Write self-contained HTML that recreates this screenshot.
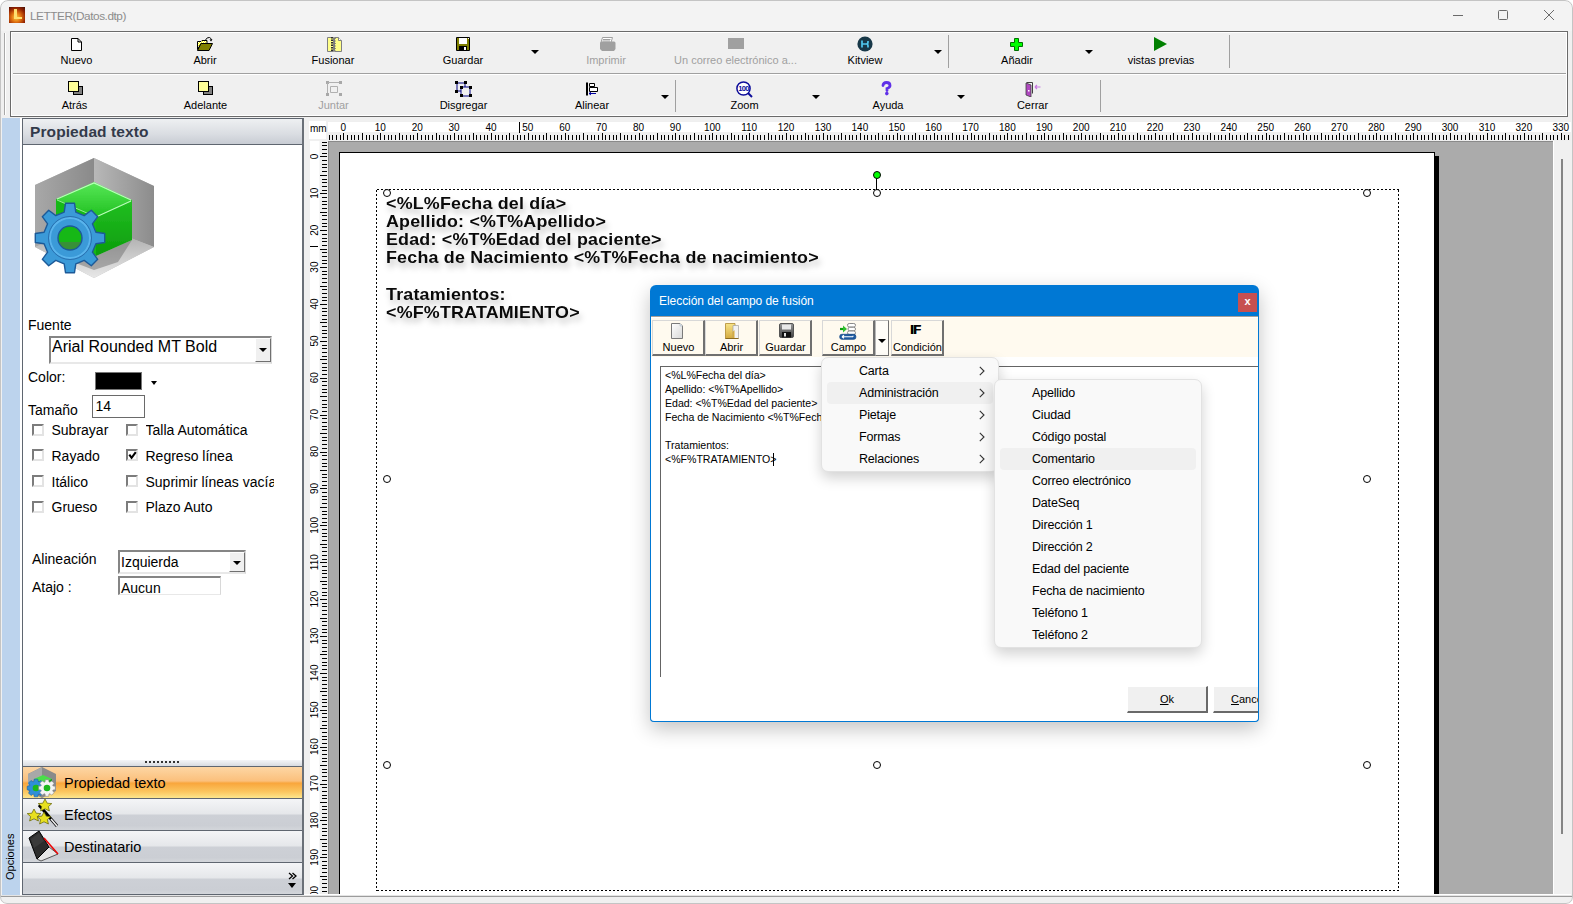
<!DOCTYPE html><html><head><meta charset="utf-8"><style>
*{margin:0;padding:0;box-sizing:border-box}
html,body{width:1573px;height:904px;overflow:hidden;background:#fff;font-family:"Liberation Sans",sans-serif;}
.ab{position:absolute}
#win{position:absolute;left:0;top:0;width:1573px;height:904px;background:#f0f0f0;overflow:hidden;border-radius:8px 8px 7px 7px}
.tb{position:absolute;font-size:11px;color:#000;white-space:nowrap;text-align:center}
.dis{color:#a0a0a0}
.arr{position:absolute;width:0;height:0;border-left:4px solid transparent;border-right:4px solid transparent;border-top:4px solid #000}
.sep{position:absolute;width:1px;background:#a0a0a0}
.lbl{position:absolute;font-size:14px;color:#000;white-space:nowrap}
.cb{position:absolute;width:12px;height:12px;border:2px solid #7c7c7c;border-right-color:#e3e3e3;border-bottom-color:#e3e3e3;background:#fff}
.mi{position:absolute;font-size:12.5px;letter-spacing:-.18px;color:#000;white-space:nowrap}
.dt{position:absolute;font-size:17px;letter-spacing:.2px;transform:scaleX(1.05);transform-origin:0 0;font-weight:bold;color:#0a0a0a;white-space:nowrap;text-shadow:2px 5px 6px rgba(0,0,0,.26)}
.hd{position:absolute;width:8px;height:8px;border:1px solid #000;border-radius:50%;background:#fff}
</style></head><body>
<div id="win">
<div class="ab" style="left:0;top:0;width:1573px;height:31px;background:#f3f3f3"></div>
<div class="ab" style="left:9px;top:7px;width:16px;height:16px;background:radial-gradient(circle at 45% 65%,#ffd040,#e07010 35%,#902000 70%,#401008)"></div>
<div class="ab" style="left:14px;top:9px;width:3px;height:10px;background:#ffe070"></div><div class="ab" style="left:14px;top:17px;width:8px;height:2px;background:#ffe070"></div>
<div class="ab" style="left:30px;top:9px;font-size:11.8px;letter-spacing:-.45px;color:#8c8c8c;line-height:14px">LETTER(Datos.dtp)</div>
<div class="ab" style="left:1453px;top:15px;width:10px;height:1px;background:#6a6a6a"></div>
<div class="ab" style="left:1498px;top:10px;width:10px;height:10px;border:1px solid #6a6a6a;border-radius:1.5px"></div>
<svg class="ab" style="left:1544px;top:10px" width="10" height="10"><path d="M0 0L10 10M10 0L0 10" stroke="#6a6a6a" stroke-width="1"/></svg>
<div class="ab" style="left:4px;top:33px;width:2px;height:82px;border-left:1px solid #a8a8a8;border-right:1px solid #fff"></div>
<div class="ab" style="left:10px;top:31px;width:1558px;height:86px;border:1px solid #6a6a6a;background:#f0f0f0;box-shadow:inset 1px 1px #fff,inset -1px -1px #fff"></div>
<div class="ab" style="left:13px;top:73px;width:1553px;height:1px;background:#a0a0a0"></div>
<div class="ab" style="left:13px;top:74px;width:1553px;height:1px;background:#fff"></div>
<div class="tb" style="left:-23.5px;top:54px;width:200px;line-height:13px">Nuevo</div>
<div class="tb" style="left:105.0px;top:54px;width:200px;line-height:13px">Abrir</div>
<div class="tb" style="left:233.0px;top:54px;width:200px;line-height:13px">Fusionar</div>
<div class="tb" style="left:363.0px;top:54px;width:200px;line-height:13px">Guardar</div>
<div class="tb dis" style="left:506.0px;top:54px;width:200px;line-height:13px">Imprimir</div>
<div class="tb dis" style="left:635.5px;top:54px;width:200px;line-height:13px">Un correo electrónico a...</div>
<div class="tb" style="left:765.0px;top:54px;width:200px;line-height:13px">Kitview</div>
<div class="tb" style="left:917.0px;top:54px;width:200px;line-height:13px">Añadir</div>
<div class="tb" style="left:1061.0px;top:54px;width:200px;line-height:13px">vistas previas</div>
<div class="tb" style="left:-25.5px;top:99px;width:200px;line-height:13px">Atrás</div>
<div class="tb" style="left:105.5px;top:99px;width:200px;line-height:13px">Adelante</div>
<div class="tb dis" style="left:233.5px;top:99px;width:200px;line-height:13px">Juntar</div>
<div class="tb" style="left:363.5px;top:99px;width:200px;line-height:13px">Disgregar</div>
<div class="tb" style="left:492.0px;top:99px;width:200px;line-height:13px">Alinear</div>
<div class="tb" style="left:644.5px;top:99px;width:200px;line-height:13px">Zoom</div>
<div class="tb" style="left:788.0px;top:99px;width:200px;line-height:13px">Ayuda</div>
<div class="tb" style="left:932.5px;top:99px;width:200px;line-height:13px">Cerrar</div>
<div class="arr" style="left:531px;top:50px"></div>
<div class="arr" style="left:933.5px;top:50px"></div>
<div class="arr" style="left:1085px;top:50px"></div>
<div class="arr" style="left:660.5px;top:95px"></div>
<div class="arr" style="left:812px;top:95px"></div>
<div class="arr" style="left:956.5px;top:95px"></div>
<div class="sep" style="left:948px;top:35px;height:33px"></div>
<div class="sep" style="left:1229px;top:35px;height:33px"></div>
<div class="sep" style="left:675px;top:80px;height:32px"></div>
<div class="sep" style="left:1100px;top:80px;height:32px"></div>
<svg class="ab" style="left:71px;top:38px" width="11" height="13" viewBox="0 0 11 13"><path d="M.5 .5H7L10.5 4V12.5H.5Z" fill="#fff" stroke="#000"/><path d="M7 .5V4H10.5" fill="none" stroke="#000"/></svg>
<svg class="ab" style="left:196px;top:36px" width="17" height="15" viewBox="0 0 17 15"><defs><pattern id="ck" width="2" height="2" patternUnits="userSpaceOnUse"><rect width="2" height="2" fill="#ffff00"/><rect width="1" height="1" fill="#fff"/><rect x="1" y="1" width="1" height="1" fill="#fff"/></pattern></defs><path d="M1.5 5.5H5L6 4.5H11V7.5H5L1.5 13.5Z" fill="url(#ck)" stroke="#000"/><path d="M1.5 14.5L5 7.5H16.5L13 14.5Z" fill="#808000" stroke="#000"/><path d="M9.5 4Q11 1 13.5 1.5Q15 2 15.5 4" fill="none" stroke="#000"/><path d="M13.5 3.5H16.5L15 5.5Z" fill="#000"/></svg>
<svg class="ab" style="left:327px;top:36px" width="15" height="16" viewBox="0 0 15 16"><path d="M.5 1.5H6.5V15.5H.5Z" fill="#ffff88" stroke="#808080"/><path d="M7.5 1.5H11.5L14.5 4.5V15.5H7.5Z" fill="#ffff88" stroke="#808080"/><path d="M11.5 1.5V4.5H14.5" fill="#fff" stroke="#808080"/><path d="M5 1V15" stroke="#303030" stroke-width="2" stroke-dasharray="1.5 1"/><path d="M8 2V15" stroke="#707070" stroke-width="1.5" stroke-dasharray="1 1.5"/></svg>
<svg class="ab" style="left:456px;top:37px" width="14" height="14" viewBox="0 0 14 14"><rect x="0" y="0" width="14" height="14" rx="1" fill="#000"/><rect x="1" y="1" width="12" height="12" fill="#808000"/><rect x="3" y="1" width="8" height="6" fill="#fff"/><rect x="3" y="9" width="8" height="4" fill="#000"/><rect x="8" y="10" width="2" height="3" fill="#fff"/><rect x="12" y="1" width="1" height="1" fill="#fff"/></svg>
<svg class="ab" style="left:599px;top:37px" width="17" height="15" viewBox="0 0 17 15"><path d="M3.5 .5H13.5L12 5.5H2Z" fill="#fff" stroke="#a0a0a0"/><path d="M4 2.5H11.5M3.5 4H11" stroke="#a0a0a0"/><path d="M1 6Q1 4.5 3 4.5H15Q16.5 4.5 16.5 6V12L15 14H3L1 12Z" fill="#a0a0a0"/></svg>
<svg class="ab" style="left:728px;top:38px" width="16" height="11" viewBox="0 0 16 11"><rect width="16" height="11" fill="#a0a0a0"/></svg>
<svg class="ab" style="left:857px;top:36px" width="16" height="16" viewBox="0 0 16 16"><circle cx="8" cy="8" r="7.6" fill="#183848"/><path d="M5 4.5V11.5M5 8H9.5Q11 8 11 6V5M9.5 8Q11 8 11 10V11.5" stroke="#50c8f0" stroke-width="1.7" fill="none"/></svg>
<svg class="ab" style="left:1010px;top:38px" width="13" height="13" viewBox="0 0 13 13"><path d="M4.5 .5H8.5V4.5H12.5V8.5H8.5V12.5H4.5V8.5H.5V4.5H4.5Z" fill="#00ff00" stroke="#007000"/></svg>
<svg class="ab" style="left:1154px;top:37px" width="13" height="14" viewBox="0 0 13 14"><path d="M0 0L13 7L0 14Z" fill="#008000"/></svg>
<svg class="ab" style="left:68px;top:81px" width="15" height="14" viewBox="0 0 15 14"><rect x="5.5" y="5.5" width="9" height="8" fill="#808080" stroke="#000"/><rect x=".5" y=".5" width="10" height="10" fill="#ffff99" stroke="#000"/></svg>
<svg class="ab" style="left:198px;top:81px" width="15" height="14" viewBox="0 0 15 14"><rect x="5.5" y="5.5" width="9" height="8" fill="#808080" stroke="#000"/><rect x=".5" y=".5" width="10" height="10" fill="#ffff99" stroke="#000"/></svg>
<svg class="ab" style="left:326px;top:81px" width="16" height="15" viewBox="0 0 16 15"><g fill="#a8a8a8"><rect x="0" y="0" width="3" height="3"/><rect x="13" y="0" width="3" height="3"/><rect x="0" y="12" width="3" height="3"/><rect x="13" y="12" width="3" height="3"/></g><path d="M1.5 2V12M2 1.5H13M4.5 5.5H11.5V11.5H4.5Z" fill="none" stroke="#b0b0b0"/></svg>
<svg class="ab" style="left:455px;top:81px" width="17" height="16" viewBox="0 0 17 16"><path d="M2 2H10V6M2 2V10H6M6 6H15V15H6Z" fill="none" stroke="#000080"/><g fill="#000"><rect x="0" y="0" width="3" height="3"/><rect x="9" y="0" width="3" height="3"/><rect x="0" y="9" width="3" height="3"/><rect x="5" y="5" width="3" height="3"/><rect x="14" y="5" width="3" height="3"/><rect x="5" y="13" width="3" height="3"/><rect x="14" y="13" width="3" height="3"/></g></svg>
<svg class="ab" style="left:586px;top:82px" width="13" height="14" viewBox="0 0 13 14"><rect x="0" y="0.5" width="2" height="13" fill="#000"/><path d="M3.5 1.5H8.5V4.5H3.5ZM3.5 5.5H11.5V9.5H3.5Z" fill="#fff" stroke="#000"/><path d="M3 11.5H10M3 11.5L5 10M3 11.5L5 13" stroke="#0000a0" fill="none"/></svg>
<svg class="ab" style="left:736px;top:81px" width="17" height="17" viewBox="0 0 17 17"><circle cx="7.5" cy="7.5" r="6.6" fill="#fff" stroke="#0c0c9a" stroke-width="1.5"/><text x="7.5" y="10.3" font-size="7.5" font-weight="bold" text-anchor="middle" fill="#0c0c9a" font-family="Liberation Sans" letter-spacing="-.6">100</text><path d="M12 12L16 16" stroke="#0c0c9a" stroke-width="2"/></svg>
<svg class="ab" style="left:881px;top:81px" width="11" height="15" viewBox="0 0 11 15"><path d="M2 4.5Q2 1.5 5.5 1.5Q9 1.5 9 4.5Q9 6.5 6 7.5V9.5" fill="none" stroke="#6030e8" stroke-width="2.8" stroke-linecap="round"/><circle cx="5.8" cy="12.6" r="1.8" fill="#6030e8"/></svg>
<svg class="ab" style="left:1025px;top:81px" width="17" height="16" viewBox="0 0 17 16"><path d="M1.5 1.5H7.5V12.5" fill="none" stroke="#404040"/><path d="M1 2L6 4V16L1 14Z" fill="#b048c0" stroke="#404040" stroke-width=".8"/><rect x="3" y="9" width="1.5" height="1.5" fill="#fff"/><path d="M10 6H15.5M10 6L12 4M10 6L12 8" stroke="#c878e0" stroke-width="1.2" fill="none"/></svg>
<div class="ab" style="left:2px;top:118px;width:18px;height:777px;background:#bcd3ed"></div>
<div class="ab" style="left:20px;top:118px;width:2px;height:777px;background:#fff"></div>
<div class="ab" style="left:3px;top:880px;width:50px;height:14px;font-size:11px;color:#000;transform:rotate(-90deg);transform-origin:0 0;line-height:14px">Opciones</div>
<div class="ab" style="left:22px;top:118px;width:282px;height:777px;border:1px solid #5f6670;border-right:2px solid #6a7078;background:#fff"></div>
<div class="ab" style="left:23px;top:119px;width:279px;height:26px;background:linear-gradient(#eef0f2,#dadde2 60%,#c8ccd3);border-bottom:1px solid #5f6670"></div>
<div class="ab" style="left:30px;top:123px;font-size:15.5px;letter-spacing:.1px;font-weight:bold;color:#333a4a;line-height:18px">Propiedad texto</div>
<svg class="ab" style="left:28px;top:152px" width="134" height="134" viewBox="0 0 134 134">
<defs>
<linearGradient id="lw" x1="0" y1="0" x2="1" y2="0"><stop offset="0" stop-color="#a8a8a8"/><stop offset="1" stop-color="#8a8a8a"/></linearGradient>
<linearGradient id="rw" x1="0" y1="0" x2="1" y2="0"><stop offset="0" stop-color="#b8b8b8"/><stop offset="1" stop-color="#8c8c8c"/></linearGradient>
<linearGradient id="fl" x1="0" y1="0" x2="0" y2="1"><stop offset="0" stop-color="#a0a0a0"/><stop offset="1" stop-color="#e8e8e8"/></linearGradient>
<linearGradient id="gt" x1="0" y1="0" x2="0" y2="1"><stop offset="0" stop-color="#58e858"/><stop offset="1" stop-color="#20c020"/></linearGradient>
<linearGradient id="gr" x1="0" y1="0" x2="0" y2="1"><stop offset="0" stop-color="#22c022"/><stop offset="1" stop-color="#0c9c0c"/></linearGradient>
<filter id="bl"><feGaussianBlur stdDeviation=".6"/></filter>
</defs>
<g filter="url(#bl)">
<path d="M66 6L126 34V95L66 126L7 95V33Z" fill="#bdbdbd"/>
<path d="M66 6V72L7 95V33Z" fill="url(#lw)"/>
<path d="M66 6L126 34V95L66 72Z" fill="url(#rw)"/>
<path d="M7 95L66 72L126 95L66 126Z" fill="url(#fl)"/>
<path d="M30 92L68 104L104 88L90 110L66 118L40 108Z" fill="#707070" opacity=".5"/>
<path d="M28 47L66 30L104 48L68 65Z" fill="url(#gt)"/>
<path d="M28 47L68 65V104L28 89Z" fill="#18b818"/>
<path d="M68 65L104 48V88L68 104Z" fill="url(#gr)"/>
<path d="M29 47L66 31L103 48M68 65L103 49" fill="none" stroke="#b8ffb8" stroke-width="1.2"/>
<path d="M29 48L68 65" fill="none" stroke="#90f090" stroke-width="1"/>
<g transform="translate(42 86)"><path d="M-5.8 -25.9L-4.5 -34.7L4.5 -34.7L5.8 -25.9L14.2 -22.4L21.3 -27.7L27.7 -21.3L22.4 -14.2L25.9 -5.8L34.7 -4.5L34.7 4.5L25.9 5.8L22.4 14.2L27.7 21.3L21.3 27.7L14.2 22.4L5.8 25.9L4.5 34.7L-4.5 34.7L-5.8 25.9L-14.2 22.4L-21.3 27.7L-27.7 21.3L-22.4 14.2L-25.9 5.8L-34.7 4.5L-34.7 -4.5L-25.9 -5.8L-22.4 -14.2L-27.7 -21.3L-21.3 -27.7L-14.2 -22.4Z" fill="#3a9ad8" stroke="#1e5a98" stroke-width="1.4" stroke-linejoin="round"/><circle r="20" fill="none" stroke="#5ab4ec" stroke-width="2"/><circle r="21.5" fill="none" stroke="#2a70b0" stroke-width="1"/><circle r="12" fill="#18b818" stroke="#1e5a98" stroke-width="1.4"/><path d="M-11 4A12 12 0 0 0 11 4Z" fill="#606060" opacity=".45"/></g>
</g>
</svg>
<div class="lbl" style="left:28px;top:317.323px;font-size:14px;line-height:16.099999999999998px;">Fuente</div>
<div class="ab" style="left:49px;top:336px;width:223px;height:28px;border:2px solid #858585;border-right-color:#d8d8d8;border-bottom-color:#e8e8e8;background:#fff"></div>
<div class="lbl" style="left:52px;top:338.012px;font-size:16px;line-height:18.4px;">Arial Rounded MT Bold</div>
<div class="ab" style="left:255px;top:338px;width:16px;height:24px;background:#f0f0f0;border:1px solid #fff;border-right-color:#707070;border-bottom-color:#707070"></div>
<div class="arr" style="left:259px;top:348px;border-width:4px 4px 0 4px"></div>
<div class="lbl" style="left:28px;top:369.323px;font-size:14px;line-height:16.099999999999998px;">Color:</div>
<div class="ab" style="left:95px;top:372px;width:47px;height:18px;background:#000;border:1px solid #777"></div>
<div class="arr" style="left:151px;top:381px;border-left-width:3.5px;border-right-width:3.5px;border-top-width:4px"></div>
<div class="lbl" style="left:28px;top:402.323px;font-size:14px;line-height:16.099999999999998px;">Tamaño</div>
<div class="ab" style="left:92px;top:395px;width:53px;height:23px;border:1px solid #6a6a6a;background:#fff"></div>
<div class="lbl" style="left:95.5px;top:397.823px;font-size:14px;line-height:16.099999999999998px;">14</div>
<div class="cb" style="left:32px;top:423.6px"></div>
<div class="cb" style="left:126px;top:423.6px"></div>
<div class="lbl" style="left:51.5px;top:422.123px;font-size:14px;line-height:16.099999999999998px;">Subrayar</div>
<div class="lbl" style="left:145.5px;top:422.123px;font-size:14px;line-height:16.099999999999998px;width:128.5px;overflow:hidden">Talla Automática</div>
<div class="cb" style="left:32px;top:449.3px"></div>
<div class="cb" style="left:126px;top:449.3px"></div>
<div class="lbl" style="left:51.5px;top:447.823px;font-size:14px;line-height:16.099999999999998px;">Rayado</div>
<div class="lbl" style="left:145.5px;top:447.823px;font-size:14px;line-height:16.099999999999998px;width:128.5px;overflow:hidden">Regreso línea</div>
<div class="cb" style="left:32px;top:475px"></div>
<div class="cb" style="left:126px;top:475px"></div>
<div class="lbl" style="left:51.5px;top:473.52299999999997px;font-size:14px;line-height:16.099999999999998px;">Itálico</div>
<div class="lbl" style="left:145.5px;top:473.52299999999997px;font-size:14px;line-height:16.099999999999998px;width:128.5px;overflow:hidden">Suprimir líneas vacías</div>
<div class="cb" style="left:32px;top:500.8px"></div>
<div class="cb" style="left:126px;top:500.8px"></div>
<div class="lbl" style="left:51.5px;top:499.323px;font-size:14px;line-height:16.099999999999998px;">Grueso</div>
<div class="lbl" style="left:145.5px;top:499.323px;font-size:14px;line-height:16.099999999999998px;width:128.5px;overflow:hidden">Plazo Auto</div>
<svg class="ab" style="left:128px;top:451px" width="9" height="9" viewBox="0 0 9 9"><path d="M1.3 3.6L3.6 6.8L7.8 1.2" fill="none" stroke="#000" stroke-width="2.1"/></svg>
<div class="lbl" style="left:32px;top:550.9230000000001px;font-size:14px;line-height:16.099999999999998px;">Alineación</div>
<div class="ab" style="left:118px;top:550px;width:128px;height:24px;border:2px solid #858585;border-right-color:#d8d8d8;border-bottom-color:#e8e8e8;background:#fff"></div>
<div class="lbl" style="left:121px;top:554.3230000000001px;font-size:14px;line-height:16.099999999999998px;">Izquierda</div>
<div class="ab" style="left:229px;top:552px;width:16px;height:20px;background:#f0f0f0;border:1px solid #fff;border-right-color:#707070;border-bottom-color:#707070"></div>
<div class="arr" style="left:233px;top:561px"></div>
<div class="lbl" style="left:32px;top:579.3230000000001px;font-size:14px;line-height:16.099999999999998px;">Atajo :</div>
<div class="ab" style="left:118px;top:576px;width:103px;height:19px;border:2px solid #858585;border-right-color:#d8d8d8;border-bottom-color:#e8e8e8;border-right-width:1px;border-bottom-width:1px;background:#fff"></div>
<div class="lbl" style="left:121px;top:579.8230000000001px;font-size:14px;line-height:16.099999999999998px;">Aucun</div>
<div class="ab" style="left:23px;top:760px;width:279px;height:6px;background:linear-gradient(#f4f5f7,#d8dbe0)"></div>
<div class="ab" style="left:145px;top:761px;width:34px;height:2px;background:repeating-linear-gradient(90deg,#333 0 2px,transparent 2px 4px)"></div>
<div class="ab" style="left:23px;top:766px;width:279px;height:32px;background:linear-gradient(#fdd6a4,#fbc07c 45%,#f9a63c 52%,#fbc660 80%,#fde68c);border-top:1px solid #5f6670"></div>
<div class="lbl" style="left:64px;top:774px;font-size:14.5px;line-height:18px">Propiedad texto</div>
<div class="ab" style="left:23px;top:798px;width:279px;height:32px;background:linear-gradient(#f4f5f7,#e5e7ea 48%,#cdd0d6 52%,#cbced4 85%,#d3d6db);border-top:1px solid #5f6670"></div>
<div class="lbl" style="left:64px;top:806px;font-size:14.5px;line-height:18px">Efectos</div>
<div class="ab" style="left:23px;top:830px;width:279px;height:32px;background:linear-gradient(#f4f5f7,#e5e7ea 48%,#cdd0d6 52%,#cbced4 85%,#d3d6db);border-top:1px solid #5f6670"></div>
<div class="lbl" style="left:64px;top:838px;font-size:14.5px;line-height:18px">Destinatario</div>
<div class="ab" style="left:23px;top:862px;width:279px;height:32px;background:linear-gradient(#f4f5f7,#e5e7ea 48%,#cdd0d6 52%,#cbced4 85%,#d3d6db);border-top:1px solid #5f6670"></div>
<div class="ab" style="left:23px;top:894px;width:279px;height:1px;background:#5f6670"></div>
<svg class="ab" style="left:26px;top:767px" width="32" height="32" viewBox="0 0 32 32"><path d="M16 0L30 7V24L16 31L2 24V7Z" fill="#8a8a8a"/><path d="M16 0V14L2 24V7Z" fill="#a8a8a8"/><path d="M8 12L17 8L26 12L17 16Z" fill="#4ade4a"/><path d="M8 12L17 16V24L8 20Z" fill="#1cb81c"/><path d="M17 16L26 12V21L17 25Z" fill="#12a012"/><path d="M7.8 14.6L8.2 12.2L11.8 12.2L12.2 14.6L13.0 14.9L15.0 13.5L17.5 16.0L16.1 18.0L16.4 18.8L18.8 19.2L18.8 22.8L16.4 23.2L16.1 24.0L17.5 26.0L15.0 28.5L13.0 27.1L12.2 27.4L11.8 29.8L8.2 29.8L7.8 27.4L7.0 27.1L5.0 28.5L2.5 26.0L3.9 24.0L3.6 23.2L1.2 22.8L1.2 19.2L3.6 18.8L3.9 18.0L2.5 16.0L5.0 13.5L7.0 14.9Z" fill="#2f8fd8" stroke="#1a5fa0" stroke-width=".6"/><circle cx="10" cy="21" r="3.3" fill="#1cb81c"/><path d="M19.0 15.0L19.3 12.7L22.7 12.7L23.0 15.0L23.8 15.3L25.7 13.9L28.1 16.3L26.7 18.2L27.0 19.0L29.3 19.3L29.3 22.7L27.0 23.0L26.7 23.8L28.1 25.7L25.7 28.1L23.8 26.7L23.0 27.0L22.7 29.3L19.3 29.3L19.0 27.0L18.2 26.7L16.3 28.1L13.9 25.7L15.3 23.8L15.0 23.0L12.7 22.7L12.7 19.3L15.0 19.0L15.3 18.2L13.9 16.3L16.3 13.9L18.2 15.3Z" fill="#f4f4f4" stroke="#888" stroke-width=".6"/><circle cx="21" cy="21" r="3.3" fill="#1cb81c"/></svg>
<svg class="ab" style="left:27px;top:798px" width="33" height="32" viewBox="0 0 33 32"><path d="M12 7L30 28" stroke="#000" stroke-width="3"/><path d="M24 21L30 28" stroke="#eee" stroke-width="1.6"/><g fill="#e8e020" stroke="#606000" stroke-width=".7"><path d="M18 1L20.2 5.2L24.8 5.6L21.4 8.6L22.4 13L18 10.8L13.6 13L14.6 8.6L11.2 5.6L15.8 5.2Z"/><path d="M7 11L9.2 15.2L13.8 15.6L10.4 18.6L11.4 23L7 20.8L2.6 23L3.6 18.6L.2 15.6L4.8 15.2Z"/><path d="M17 14L19.2 18.2L23.8 18.6L20.4 21.6L21.4 26L17 23.8L12.6 26L13.6 21.6L10.2 18.6L14.8 18.2Z"/></g></svg>
<svg class="ab" style="left:27px;top:830px" width="33" height="32" viewBox="0 0 33 32"><path d="M10 29L22 17L31 24L14 31Z" fill="#e6e6e6" stroke="#333" stroke-width=".8"/><path d="M2 8L12 1L22 17L10 29Z" fill="#2c2c2c" stroke="#000" stroke-width="1"/><path d="M4 9L12 3L17 11L7 18Z" fill="#3a3a3a"/><path d="M17 8L31 24" stroke="#e00" stroke-width="1.5"/></svg>
<svg class="ab" style="left:288px;top:872px" width="10" height="8" viewBox="0 0 10 8"><path d="M1 1L4.5 4L1 7M4.5 1L8 4L4.5 7" fill="none" stroke="#000" stroke-width="1.3"/></svg>
<div class="arr" style="left:288px;top:883px;border-width:5px 4px 0 4px"></div>
<div class="ab" style="left:304px;top:118px;width:1267px;height:777px;background:#f0f0f0"></div>
<div class="ab" style="left:309px;top:121px;width:17px;height:18px;background:#fff"></div>
<div class="ab" style="left:310px;top:123px;font-size:10px;line-height:12px;color:#000">mm</div>
<div class="ab" style="left:328px;top:141px;width:1225px;height:753px;background:#ababab"></div>
<div class="ab" style="left:339px;top:152px;width:1096px;height:760px;background:#fff;border-left:1px solid #000;border-top:1px solid #000;border-right:1px solid #000"></div>
<div class="ab" style="left:1435px;top:156px;width:4px;height:740px;background:#000"></div>
<svg class="ab" style="left:327px;top:121px" width="1244" height="20" viewBox="0 0 1244 20"><rect x="0" y="0" width="1244" height="20" fill="#efefef"/><rect x="1" y="1" width="1243" height="10" fill="#fff"/><rect x="2" y="14" width="1" height="5" fill="#000"/><rect x="5" y="14" width="1" height="5" fill="#000"/><rect x="9" y="14" width="1" height="5" fill="#000"/><rect x="13" y="14" width="1" height="5" fill="#000"/><rect x="16" y="12" width="1" height="7" fill="#000"/><text x="16.4" y="10" font-size="10" text-anchor="middle" font-family="Liberation Sans">0</text><rect x="20" y="14" width="1" height="5" fill="#000"/><rect x="24" y="14" width="1" height="5" fill="#000"/><rect x="27" y="14" width="1" height="5" fill="#000"/><rect x="31" y="14" width="1" height="5" fill="#000"/><rect x="35" y="12" width="1" height="7" fill="#000"/><rect x="39" y="14" width="1" height="5" fill="#000"/><rect x="42" y="14" width="1" height="5" fill="#000"/><rect x="46" y="14" width="1" height="5" fill="#000"/><rect x="50" y="14" width="1" height="5" fill="#000"/><rect x="53" y="12" width="1" height="7" fill="#000"/><text x="53.3" y="10" font-size="10" text-anchor="middle" font-family="Liberation Sans">10</text><rect x="57" y="14" width="1" height="5" fill="#000"/><rect x="61" y="14" width="1" height="5" fill="#000"/><rect x="64" y="14" width="1" height="5" fill="#000"/><rect x="68" y="14" width="1" height="5" fill="#000"/><rect x="72" y="12" width="1" height="7" fill="#000"/><rect x="75" y="14" width="1" height="5" fill="#000"/><rect x="79" y="14" width="1" height="5" fill="#000"/><rect x="83" y="14" width="1" height="5" fill="#000"/><rect x="86" y="14" width="1" height="5" fill="#000"/><rect x="90" y="12" width="1" height="7" fill="#000"/><text x="90.2" y="10" font-size="10" text-anchor="middle" font-family="Liberation Sans">20</text><rect x="94" y="14" width="1" height="5" fill="#000"/><rect x="98" y="14" width="1" height="5" fill="#000"/><rect x="101" y="14" width="1" height="5" fill="#000"/><rect x="105" y="14" width="1" height="5" fill="#000"/><rect x="109" y="12" width="1" height="7" fill="#000"/><rect x="112" y="14" width="1" height="5" fill="#000"/><rect x="116" y="14" width="1" height="5" fill="#000"/><rect x="120" y="14" width="1" height="5" fill="#000"/><rect x="123" y="14" width="1" height="5" fill="#000"/><rect x="127" y="12" width="1" height="7" fill="#000"/><text x="127.1" y="10" font-size="10" text-anchor="middle" font-family="Liberation Sans">30</text><rect x="131" y="14" width="1" height="5" fill="#000"/><rect x="134" y="14" width="1" height="5" fill="#000"/><rect x="138" y="14" width="1" height="5" fill="#000"/><rect x="142" y="14" width="1" height="5" fill="#000"/><rect x="146" y="12" width="1" height="7" fill="#000"/><rect x="149" y="14" width="1" height="5" fill="#000"/><rect x="153" y="14" width="1" height="5" fill="#000"/><rect x="157" y="14" width="1" height="5" fill="#000"/><rect x="160" y="14" width="1" height="5" fill="#000"/><rect x="164" y="12" width="1" height="7" fill="#000"/><text x="164.0" y="10" font-size="10" text-anchor="middle" font-family="Liberation Sans">40</text><rect x="168" y="14" width="1" height="5" fill="#000"/><rect x="171" y="14" width="1" height="5" fill="#000"/><rect x="175" y="14" width="1" height="5" fill="#000"/><rect x="179" y="14" width="1" height="5" fill="#000"/><rect x="182" y="12" width="1" height="7" fill="#000"/><rect x="186" y="14" width="1" height="5" fill="#000"/><rect x="190" y="14" width="1" height="5" fill="#000"/><rect x="193" y="14" width="1" height="5" fill="#000"/><rect x="197" y="14" width="1" height="5" fill="#000"/><rect x="201" y="12" width="1" height="7" fill="#000"/><text x="200.8" y="10" font-size="10" text-anchor="middle" font-family="Liberation Sans">50</text><rect x="205" y="14" width="1" height="5" fill="#000"/><rect x="208" y="14" width="1" height="5" fill="#000"/><rect x="212" y="14" width="1" height="5" fill="#000"/><rect x="216" y="14" width="1" height="5" fill="#000"/><rect x="219" y="12" width="1" height="7" fill="#000"/><rect x="223" y="14" width="1" height="5" fill="#000"/><rect x="227" y="14" width="1" height="5" fill="#000"/><rect x="230" y="14" width="1" height="5" fill="#000"/><rect x="234" y="14" width="1" height="5" fill="#000"/><rect x="238" y="12" width="1" height="7" fill="#000"/><text x="237.7" y="10" font-size="10" text-anchor="middle" font-family="Liberation Sans">60</text><rect x="241" y="14" width="1" height="5" fill="#000"/><rect x="245" y="14" width="1" height="5" fill="#000"/><rect x="249" y="14" width="1" height="5" fill="#000"/><rect x="252" y="14" width="1" height="5" fill="#000"/><rect x="256" y="12" width="1" height="7" fill="#000"/><rect x="260" y="14" width="1" height="5" fill="#000"/><rect x="264" y="14" width="1" height="5" fill="#000"/><rect x="267" y="14" width="1" height="5" fill="#000"/><rect x="271" y="14" width="1" height="5" fill="#000"/><rect x="275" y="12" width="1" height="7" fill="#000"/><text x="274.6" y="10" font-size="10" text-anchor="middle" font-family="Liberation Sans">70</text><rect x="278" y="14" width="1" height="5" fill="#000"/><rect x="282" y="14" width="1" height="5" fill="#000"/><rect x="286" y="14" width="1" height="5" fill="#000"/><rect x="289" y="14" width="1" height="5" fill="#000"/><rect x="293" y="12" width="1" height="7" fill="#000"/><rect x="297" y="14" width="1" height="5" fill="#000"/><rect x="300" y="14" width="1" height="5" fill="#000"/><rect x="304" y="14" width="1" height="5" fill="#000"/><rect x="308" y="14" width="1" height="5" fill="#000"/><rect x="312" y="12" width="1" height="7" fill="#000"/><text x="311.5" y="10" font-size="10" text-anchor="middle" font-family="Liberation Sans">80</text><rect x="315" y="14" width="1" height="5" fill="#000"/><rect x="319" y="14" width="1" height="5" fill="#000"/><rect x="323" y="14" width="1" height="5" fill="#000"/><rect x="326" y="14" width="1" height="5" fill="#000"/><rect x="330" y="12" width="1" height="7" fill="#000"/><rect x="334" y="14" width="1" height="5" fill="#000"/><rect x="337" y="14" width="1" height="5" fill="#000"/><rect x="341" y="14" width="1" height="5" fill="#000"/><rect x="345" y="14" width="1" height="5" fill="#000"/><rect x="348" y="12" width="1" height="7" fill="#000"/><text x="348.4" y="10" font-size="10" text-anchor="middle" font-family="Liberation Sans">90</text><rect x="352" y="14" width="1" height="5" fill="#000"/><rect x="356" y="14" width="1" height="5" fill="#000"/><rect x="359" y="14" width="1" height="5" fill="#000"/><rect x="363" y="14" width="1" height="5" fill="#000"/><rect x="367" y="12" width="1" height="7" fill="#000"/><rect x="371" y="14" width="1" height="5" fill="#000"/><rect x="374" y="14" width="1" height="5" fill="#000"/><rect x="378" y="14" width="1" height="5" fill="#000"/><rect x="382" y="14" width="1" height="5" fill="#000"/><rect x="385" y="12" width="1" height="7" fill="#000"/><text x="385.3" y="10" font-size="10" text-anchor="middle" font-family="Liberation Sans">100</text><rect x="389" y="14" width="1" height="5" fill="#000"/><rect x="393" y="14" width="1" height="5" fill="#000"/><rect x="396" y="14" width="1" height="5" fill="#000"/><rect x="400" y="14" width="1" height="5" fill="#000"/><rect x="404" y="12" width="1" height="7" fill="#000"/><rect x="407" y="14" width="1" height="5" fill="#000"/><rect x="411" y="14" width="1" height="5" fill="#000"/><rect x="415" y="14" width="1" height="5" fill="#000"/><rect x="419" y="14" width="1" height="5" fill="#000"/><rect x="422" y="12" width="1" height="7" fill="#000"/><text x="422.2" y="10" font-size="10" text-anchor="middle" font-family="Liberation Sans">110</text><rect x="426" y="14" width="1" height="5" fill="#000"/><rect x="430" y="14" width="1" height="5" fill="#000"/><rect x="433" y="14" width="1" height="5" fill="#000"/><rect x="437" y="14" width="1" height="5" fill="#000"/><rect x="441" y="12" width="1" height="7" fill="#000"/><rect x="444" y="14" width="1" height="5" fill="#000"/><rect x="448" y="14" width="1" height="5" fill="#000"/><rect x="452" y="14" width="1" height="5" fill="#000"/><rect x="455" y="14" width="1" height="5" fill="#000"/><rect x="459" y="12" width="1" height="7" fill="#000"/><text x="459.1" y="10" font-size="10" text-anchor="middle" font-family="Liberation Sans">120</text><rect x="463" y="14" width="1" height="5" fill="#000"/><rect x="466" y="14" width="1" height="5" fill="#000"/><rect x="470" y="14" width="1" height="5" fill="#000"/><rect x="474" y="14" width="1" height="5" fill="#000"/><rect x="478" y="12" width="1" height="7" fill="#000"/><rect x="481" y="14" width="1" height="5" fill="#000"/><rect x="485" y="14" width="1" height="5" fill="#000"/><rect x="489" y="14" width="1" height="5" fill="#000"/><rect x="492" y="14" width="1" height="5" fill="#000"/><rect x="496" y="12" width="1" height="7" fill="#000"/><text x="496.0" y="10" font-size="10" text-anchor="middle" font-family="Liberation Sans">130</text><rect x="500" y="14" width="1" height="5" fill="#000"/><rect x="503" y="14" width="1" height="5" fill="#000"/><rect x="507" y="14" width="1" height="5" fill="#000"/><rect x="511" y="14" width="1" height="5" fill="#000"/><rect x="514" y="12" width="1" height="7" fill="#000"/><rect x="518" y="14" width="1" height="5" fill="#000"/><rect x="522" y="14" width="1" height="5" fill="#000"/><rect x="525" y="14" width="1" height="5" fill="#000"/><rect x="529" y="14" width="1" height="5" fill="#000"/><rect x="533" y="12" width="1" height="7" fill="#000"/><text x="532.9" y="10" font-size="10" text-anchor="middle" font-family="Liberation Sans">140</text><rect x="537" y="14" width="1" height="5" fill="#000"/><rect x="540" y="14" width="1" height="5" fill="#000"/><rect x="544" y="14" width="1" height="5" fill="#000"/><rect x="548" y="14" width="1" height="5" fill="#000"/><rect x="551" y="12" width="1" height="7" fill="#000"/><rect x="555" y="14" width="1" height="5" fill="#000"/><rect x="559" y="14" width="1" height="5" fill="#000"/><rect x="562" y="14" width="1" height="5" fill="#000"/><rect x="566" y="14" width="1" height="5" fill="#000"/><rect x="570" y="12" width="1" height="7" fill="#000"/><text x="569.8" y="10" font-size="10" text-anchor="middle" font-family="Liberation Sans">150</text><rect x="573" y="14" width="1" height="5" fill="#000"/><rect x="577" y="14" width="1" height="5" fill="#000"/><rect x="581" y="14" width="1" height="5" fill="#000"/><rect x="585" y="14" width="1" height="5" fill="#000"/><rect x="588" y="12" width="1" height="7" fill="#000"/><rect x="592" y="14" width="1" height="5" fill="#000"/><rect x="596" y="14" width="1" height="5" fill="#000"/><rect x="599" y="14" width="1" height="5" fill="#000"/><rect x="603" y="14" width="1" height="5" fill="#000"/><rect x="607" y="12" width="1" height="7" fill="#000"/><text x="606.6" y="10" font-size="10" text-anchor="middle" font-family="Liberation Sans">160</text><rect x="610" y="14" width="1" height="5" fill="#000"/><rect x="614" y="14" width="1" height="5" fill="#000"/><rect x="618" y="14" width="1" height="5" fill="#000"/><rect x="621" y="14" width="1" height="5" fill="#000"/><rect x="625" y="12" width="1" height="7" fill="#000"/><rect x="629" y="14" width="1" height="5" fill="#000"/><rect x="632" y="14" width="1" height="5" fill="#000"/><rect x="636" y="14" width="1" height="5" fill="#000"/><rect x="640" y="14" width="1" height="5" fill="#000"/><rect x="644" y="12" width="1" height="7" fill="#000"/><text x="643.5" y="10" font-size="10" text-anchor="middle" font-family="Liberation Sans">170</text><rect x="647" y="14" width="1" height="5" fill="#000"/><rect x="651" y="14" width="1" height="5" fill="#000"/><rect x="655" y="14" width="1" height="5" fill="#000"/><rect x="658" y="14" width="1" height="5" fill="#000"/><rect x="662" y="12" width="1" height="7" fill="#000"/><rect x="666" y="14" width="1" height="5" fill="#000"/><rect x="669" y="14" width="1" height="5" fill="#000"/><rect x="673" y="14" width="1" height="5" fill="#000"/><rect x="677" y="14" width="1" height="5" fill="#000"/><rect x="680" y="12" width="1" height="7" fill="#000"/><text x="680.4" y="10" font-size="10" text-anchor="middle" font-family="Liberation Sans">180</text><rect x="684" y="14" width="1" height="5" fill="#000"/><rect x="688" y="14" width="1" height="5" fill="#000"/><rect x="691" y="14" width="1" height="5" fill="#000"/><rect x="695" y="14" width="1" height="5" fill="#000"/><rect x="699" y="12" width="1" height="7" fill="#000"/><rect x="703" y="14" width="1" height="5" fill="#000"/><rect x="706" y="14" width="1" height="5" fill="#000"/><rect x="710" y="14" width="1" height="5" fill="#000"/><rect x="714" y="14" width="1" height="5" fill="#000"/><rect x="717" y="12" width="1" height="7" fill="#000"/><text x="717.3" y="10" font-size="10" text-anchor="middle" font-family="Liberation Sans">190</text><rect x="721" y="14" width="1" height="5" fill="#000"/><rect x="725" y="14" width="1" height="5" fill="#000"/><rect x="728" y="14" width="1" height="5" fill="#000"/><rect x="732" y="14" width="1" height="5" fill="#000"/><rect x="736" y="12" width="1" height="7" fill="#000"/><rect x="739" y="14" width="1" height="5" fill="#000"/><rect x="743" y="14" width="1" height="5" fill="#000"/><rect x="747" y="14" width="1" height="5" fill="#000"/><rect x="751" y="14" width="1" height="5" fill="#000"/><rect x="754" y="12" width="1" height="7" fill="#000"/><text x="754.2" y="10" font-size="10" text-anchor="middle" font-family="Liberation Sans">200</text><rect x="758" y="14" width="1" height="5" fill="#000"/><rect x="762" y="14" width="1" height="5" fill="#000"/><rect x="765" y="14" width="1" height="5" fill="#000"/><rect x="769" y="14" width="1" height="5" fill="#000"/><rect x="773" y="12" width="1" height="7" fill="#000"/><rect x="776" y="14" width="1" height="5" fill="#000"/><rect x="780" y="14" width="1" height="5" fill="#000"/><rect x="784" y="14" width="1" height="5" fill="#000"/><rect x="787" y="14" width="1" height="5" fill="#000"/><rect x="791" y="12" width="1" height="7" fill="#000"/><text x="791.1" y="10" font-size="10" text-anchor="middle" font-family="Liberation Sans">210</text><rect x="795" y="14" width="1" height="5" fill="#000"/><rect x="798" y="14" width="1" height="5" fill="#000"/><rect x="802" y="14" width="1" height="5" fill="#000"/><rect x="806" y="14" width="1" height="5" fill="#000"/><rect x="810" y="12" width="1" height="7" fill="#000"/><rect x="813" y="14" width="1" height="5" fill="#000"/><rect x="817" y="14" width="1" height="5" fill="#000"/><rect x="821" y="14" width="1" height="5" fill="#000"/><rect x="824" y="14" width="1" height="5" fill="#000"/><rect x="828" y="12" width="1" height="7" fill="#000"/><text x="828.0" y="10" font-size="10" text-anchor="middle" font-family="Liberation Sans">220</text><rect x="832" y="14" width="1" height="5" fill="#000"/><rect x="835" y="14" width="1" height="5" fill="#000"/><rect x="839" y="14" width="1" height="5" fill="#000"/><rect x="843" y="14" width="1" height="5" fill="#000"/><rect x="846" y="12" width="1" height="7" fill="#000"/><rect x="850" y="14" width="1" height="5" fill="#000"/><rect x="854" y="14" width="1" height="5" fill="#000"/><rect x="857" y="14" width="1" height="5" fill="#000"/><rect x="861" y="14" width="1" height="5" fill="#000"/><rect x="865" y="12" width="1" height="7" fill="#000"/><text x="864.9" y="10" font-size="10" text-anchor="middle" font-family="Liberation Sans">230</text><rect x="869" y="14" width="1" height="5" fill="#000"/><rect x="872" y="14" width="1" height="5" fill="#000"/><rect x="876" y="14" width="1" height="5" fill="#000"/><rect x="880" y="14" width="1" height="5" fill="#000"/><rect x="883" y="12" width="1" height="7" fill="#000"/><rect x="887" y="14" width="1" height="5" fill="#000"/><rect x="891" y="14" width="1" height="5" fill="#000"/><rect x="894" y="14" width="1" height="5" fill="#000"/><rect x="898" y="14" width="1" height="5" fill="#000"/><rect x="902" y="12" width="1" height="7" fill="#000"/><text x="901.8" y="10" font-size="10" text-anchor="middle" font-family="Liberation Sans">240</text><rect x="905" y="14" width="1" height="5" fill="#000"/><rect x="909" y="14" width="1" height="5" fill="#000"/><rect x="913" y="14" width="1" height="5" fill="#000"/><rect x="917" y="14" width="1" height="5" fill="#000"/><rect x="920" y="12" width="1" height="7" fill="#000"/><rect x="924" y="14" width="1" height="5" fill="#000"/><rect x="928" y="14" width="1" height="5" fill="#000"/><rect x="931" y="14" width="1" height="5" fill="#000"/><rect x="935" y="14" width="1" height="5" fill="#000"/><rect x="939" y="12" width="1" height="7" fill="#000"/><text x="938.7" y="10" font-size="10" text-anchor="middle" font-family="Liberation Sans">250</text><rect x="942" y="14" width="1" height="5" fill="#000"/><rect x="946" y="14" width="1" height="5" fill="#000"/><rect x="950" y="14" width="1" height="5" fill="#000"/><rect x="953" y="14" width="1" height="5" fill="#000"/><rect x="957" y="12" width="1" height="7" fill="#000"/><rect x="961" y="14" width="1" height="5" fill="#000"/><rect x="964" y="14" width="1" height="5" fill="#000"/><rect x="968" y="14" width="1" height="5" fill="#000"/><rect x="972" y="14" width="1" height="5" fill="#000"/><rect x="976" y="12" width="1" height="7" fill="#000"/><text x="975.5" y="10" font-size="10" text-anchor="middle" font-family="Liberation Sans">260</text><rect x="979" y="14" width="1" height="5" fill="#000"/><rect x="983" y="14" width="1" height="5" fill="#000"/><rect x="987" y="14" width="1" height="5" fill="#000"/><rect x="990" y="14" width="1" height="5" fill="#000"/><rect x="994" y="12" width="1" height="7" fill="#000"/><rect x="998" y="14" width="1" height="5" fill="#000"/><rect x="1001" y="14" width="1" height="5" fill="#000"/><rect x="1005" y="14" width="1" height="5" fill="#000"/><rect x="1009" y="14" width="1" height="5" fill="#000"/><rect x="1012" y="12" width="1" height="7" fill="#000"/><text x="1012.4" y="10" font-size="10" text-anchor="middle" font-family="Liberation Sans">270</text><rect x="1016" y="14" width="1" height="5" fill="#000"/><rect x="1020" y="14" width="1" height="5" fill="#000"/><rect x="1023" y="14" width="1" height="5" fill="#000"/><rect x="1027" y="14" width="1" height="5" fill="#000"/><rect x="1031" y="12" width="1" height="7" fill="#000"/><rect x="1035" y="14" width="1" height="5" fill="#000"/><rect x="1038" y="14" width="1" height="5" fill="#000"/><rect x="1042" y="14" width="1" height="5" fill="#000"/><rect x="1046" y="14" width="1" height="5" fill="#000"/><rect x="1049" y="12" width="1" height="7" fill="#000"/><text x="1049.3" y="10" font-size="10" text-anchor="middle" font-family="Liberation Sans">280</text><rect x="1053" y="14" width="1" height="5" fill="#000"/><rect x="1057" y="14" width="1" height="5" fill="#000"/><rect x="1060" y="14" width="1" height="5" fill="#000"/><rect x="1064" y="14" width="1" height="5" fill="#000"/><rect x="1068" y="12" width="1" height="7" fill="#000"/><rect x="1071" y="14" width="1" height="5" fill="#000"/><rect x="1075" y="14" width="1" height="5" fill="#000"/><rect x="1079" y="14" width="1" height="5" fill="#000"/><rect x="1083" y="14" width="1" height="5" fill="#000"/><rect x="1086" y="12" width="1" height="7" fill="#000"/><text x="1086.2" y="10" font-size="10" text-anchor="middle" font-family="Liberation Sans">290</text><rect x="1090" y="14" width="1" height="5" fill="#000"/><rect x="1094" y="14" width="1" height="5" fill="#000"/><rect x="1097" y="14" width="1" height="5" fill="#000"/><rect x="1101" y="14" width="1" height="5" fill="#000"/><rect x="1105" y="12" width="1" height="7" fill="#000"/><rect x="1108" y="14" width="1" height="5" fill="#000"/><rect x="1112" y="14" width="1" height="5" fill="#000"/><rect x="1116" y="14" width="1" height="5" fill="#000"/><rect x="1119" y="14" width="1" height="5" fill="#000"/><rect x="1123" y="12" width="1" height="7" fill="#000"/><text x="1123.1" y="10" font-size="10" text-anchor="middle" font-family="Liberation Sans">300</text><rect x="1127" y="14" width="1" height="5" fill="#000"/><rect x="1130" y="14" width="1" height="5" fill="#000"/><rect x="1134" y="14" width="1" height="5" fill="#000"/><rect x="1138" y="14" width="1" height="5" fill="#000"/><rect x="1142" y="12" width="1" height="7" fill="#000"/><rect x="1145" y="14" width="1" height="5" fill="#000"/><rect x="1149" y="14" width="1" height="5" fill="#000"/><rect x="1153" y="14" width="1" height="5" fill="#000"/><rect x="1156" y="14" width="1" height="5" fill="#000"/><rect x="1160" y="12" width="1" height="7" fill="#000"/><text x="1160.0" y="10" font-size="10" text-anchor="middle" font-family="Liberation Sans">310</text><rect x="1164" y="14" width="1" height="5" fill="#000"/><rect x="1167" y="14" width="1" height="5" fill="#000"/><rect x="1171" y="14" width="1" height="5" fill="#000"/><rect x="1175" y="14" width="1" height="5" fill="#000"/><rect x="1178" y="12" width="1" height="7" fill="#000"/><rect x="1182" y="14" width="1" height="5" fill="#000"/><rect x="1186" y="14" width="1" height="5" fill="#000"/><rect x="1190" y="14" width="1" height="5" fill="#000"/><rect x="1193" y="14" width="1" height="5" fill="#000"/><rect x="1197" y="12" width="1" height="7" fill="#000"/><text x="1196.9" y="10" font-size="10" text-anchor="middle" font-family="Liberation Sans">320</text><rect x="1201" y="14" width="1" height="5" fill="#000"/><rect x="1204" y="14" width="1" height="5" fill="#000"/><rect x="1208" y="14" width="1" height="5" fill="#000"/><rect x="1212" y="14" width="1" height="5" fill="#000"/><rect x="1215" y="12" width="1" height="7" fill="#000"/><rect x="1219" y="14" width="1" height="5" fill="#000"/><rect x="1223" y="14" width="1" height="5" fill="#000"/><rect x="1226" y="14" width="1" height="5" fill="#000"/><rect x="1230" y="14" width="1" height="5" fill="#000"/><rect x="1234" y="12" width="1" height="7" fill="#000"/><text x="1233.8" y="10" font-size="10" text-anchor="middle" font-family="Liberation Sans">330</text><rect x="1237" y="14" width="1" height="5" fill="#000"/><rect x="1241" y="14" width="1" height="5" fill="#000"/></svg>
<svg class="ab" style="left:310px;top:141px" width="18" height="753" viewBox="0 0 18 753"><rect x="0" y="0" width="18" height="753" fill="#efefef"/><rect x="0" y="0" width="9.5" height="753" fill="#fff"/><rect x="12" y="1" width="5" height="1" fill="#000"/><rect x="12" y="4" width="5" height="1" fill="#000"/><rect x="12" y="8" width="5" height="1" fill="#000"/><rect x="12" y="12" width="5" height="1" fill="#000"/><rect x="10" y="15" width="7" height="1" fill="#000"/><text transform="translate(8 15.4) rotate(-90)" font-size="10" text-anchor="middle" font-family="Liberation Sans">0</text><rect x="12" y="19" width="5" height="1" fill="#000"/><rect x="12" y="23" width="5" height="1" fill="#000"/><rect x="12" y="26" width="5" height="1" fill="#000"/><rect x="12" y="30" width="5" height="1" fill="#000"/><rect x="10" y="34" width="7" height="1" fill="#000"/><rect x="12" y="38" width="5" height="1" fill="#000"/><rect x="12" y="41" width="5" height="1" fill="#000"/><rect x="12" y="45" width="5" height="1" fill="#000"/><rect x="12" y="49" width="5" height="1" fill="#000"/><rect x="10" y="52" width="7" height="1" fill="#000"/><text transform="translate(8 52.3) rotate(-90)" font-size="10" text-anchor="middle" font-family="Liberation Sans">10</text><rect x="12" y="56" width="5" height="1" fill="#000"/><rect x="12" y="60" width="5" height="1" fill="#000"/><rect x="12" y="63" width="5" height="1" fill="#000"/><rect x="12" y="67" width="5" height="1" fill="#000"/><rect x="10" y="71" width="7" height="1" fill="#000"/><rect x="12" y="74" width="5" height="1" fill="#000"/><rect x="12" y="78" width="5" height="1" fill="#000"/><rect x="12" y="82" width="5" height="1" fill="#000"/><rect x="12" y="85" width="5" height="1" fill="#000"/><rect x="10" y="89" width="7" height="1" fill="#000"/><text transform="translate(8 89.2) rotate(-90)" font-size="10" text-anchor="middle" font-family="Liberation Sans">20</text><rect x="12" y="93" width="5" height="1" fill="#000"/><rect x="12" y="97" width="5" height="1" fill="#000"/><rect x="12" y="100" width="5" height="1" fill="#000"/><rect x="12" y="104" width="5" height="1" fill="#000"/><rect x="10" y="108" width="7" height="1" fill="#000"/><rect x="12" y="111" width="5" height="1" fill="#000"/><rect x="12" y="115" width="5" height="1" fill="#000"/><rect x="12" y="119" width="5" height="1" fill="#000"/><rect x="12" y="122" width="5" height="1" fill="#000"/><rect x="10" y="126" width="7" height="1" fill="#000"/><text transform="translate(8 126.1) rotate(-90)" font-size="10" text-anchor="middle" font-family="Liberation Sans">30</text><rect x="12" y="130" width="5" height="1" fill="#000"/><rect x="12" y="133" width="5" height="1" fill="#000"/><rect x="12" y="137" width="5" height="1" fill="#000"/><rect x="12" y="141" width="5" height="1" fill="#000"/><rect x="10" y="145" width="7" height="1" fill="#000"/><rect x="12" y="148" width="5" height="1" fill="#000"/><rect x="12" y="152" width="5" height="1" fill="#000"/><rect x="12" y="156" width="5" height="1" fill="#000"/><rect x="12" y="159" width="5" height="1" fill="#000"/><rect x="10" y="163" width="7" height="1" fill="#000"/><text transform="translate(8 163.0) rotate(-90)" font-size="10" text-anchor="middle" font-family="Liberation Sans">40</text><rect x="12" y="167" width="5" height="1" fill="#000"/><rect x="12" y="170" width="5" height="1" fill="#000"/><rect x="12" y="174" width="5" height="1" fill="#000"/><rect x="12" y="178" width="5" height="1" fill="#000"/><rect x="10" y="181" width="7" height="1" fill="#000"/><rect x="12" y="185" width="5" height="1" fill="#000"/><rect x="12" y="189" width="5" height="1" fill="#000"/><rect x="12" y="192" width="5" height="1" fill="#000"/><rect x="12" y="196" width="5" height="1" fill="#000"/><rect x="10" y="200" width="7" height="1" fill="#000"/><text transform="translate(8 199.9) rotate(-90)" font-size="10" text-anchor="middle" font-family="Liberation Sans">50</text><rect x="12" y="204" width="5" height="1" fill="#000"/><rect x="12" y="207" width="5" height="1" fill="#000"/><rect x="12" y="211" width="5" height="1" fill="#000"/><rect x="12" y="215" width="5" height="1" fill="#000"/><rect x="10" y="218" width="7" height="1" fill="#000"/><rect x="12" y="222" width="5" height="1" fill="#000"/><rect x="12" y="226" width="5" height="1" fill="#000"/><rect x="12" y="229" width="5" height="1" fill="#000"/><rect x="12" y="233" width="5" height="1" fill="#000"/><rect x="10" y="237" width="7" height="1" fill="#000"/><text transform="translate(8 236.7) rotate(-90)" font-size="10" text-anchor="middle" font-family="Liberation Sans">60</text><rect x="12" y="240" width="5" height="1" fill="#000"/><rect x="12" y="244" width="5" height="1" fill="#000"/><rect x="12" y="248" width="5" height="1" fill="#000"/><rect x="12" y="251" width="5" height="1" fill="#000"/><rect x="10" y="255" width="7" height="1" fill="#000"/><rect x="12" y="259" width="5" height="1" fill="#000"/><rect x="12" y="263" width="5" height="1" fill="#000"/><rect x="12" y="266" width="5" height="1" fill="#000"/><rect x="12" y="270" width="5" height="1" fill="#000"/><rect x="10" y="274" width="7" height="1" fill="#000"/><text transform="translate(8 273.6) rotate(-90)" font-size="10" text-anchor="middle" font-family="Liberation Sans">70</text><rect x="12" y="277" width="5" height="1" fill="#000"/><rect x="12" y="281" width="5" height="1" fill="#000"/><rect x="12" y="285" width="5" height="1" fill="#000"/><rect x="12" y="288" width="5" height="1" fill="#000"/><rect x="10" y="292" width="7" height="1" fill="#000"/><rect x="12" y="296" width="5" height="1" fill="#000"/><rect x="12" y="299" width="5" height="1" fill="#000"/><rect x="12" y="303" width="5" height="1" fill="#000"/><rect x="12" y="307" width="5" height="1" fill="#000"/><rect x="10" y="311" width="7" height="1" fill="#000"/><text transform="translate(8 310.5) rotate(-90)" font-size="10" text-anchor="middle" font-family="Liberation Sans">80</text><rect x="12" y="314" width="5" height="1" fill="#000"/><rect x="12" y="318" width="5" height="1" fill="#000"/><rect x="12" y="322" width="5" height="1" fill="#000"/><rect x="12" y="325" width="5" height="1" fill="#000"/><rect x="10" y="329" width="7" height="1" fill="#000"/><rect x="12" y="333" width="5" height="1" fill="#000"/><rect x="12" y="336" width="5" height="1" fill="#000"/><rect x="12" y="340" width="5" height="1" fill="#000"/><rect x="12" y="344" width="5" height="1" fill="#000"/><rect x="10" y="347" width="7" height="1" fill="#000"/><text transform="translate(8 347.4) rotate(-90)" font-size="10" text-anchor="middle" font-family="Liberation Sans">90</text><rect x="12" y="351" width="5" height="1" fill="#000"/><rect x="12" y="355" width="5" height="1" fill="#000"/><rect x="12" y="358" width="5" height="1" fill="#000"/><rect x="12" y="362" width="5" height="1" fill="#000"/><rect x="10" y="366" width="7" height="1" fill="#000"/><rect x="12" y="370" width="5" height="1" fill="#000"/><rect x="12" y="373" width="5" height="1" fill="#000"/><rect x="12" y="377" width="5" height="1" fill="#000"/><rect x="12" y="381" width="5" height="1" fill="#000"/><rect x="10" y="384" width="7" height="1" fill="#000"/><text transform="translate(8 384.3) rotate(-90)" font-size="10" text-anchor="middle" font-family="Liberation Sans">100</text><rect x="12" y="388" width="5" height="1" fill="#000"/><rect x="12" y="392" width="5" height="1" fill="#000"/><rect x="12" y="395" width="5" height="1" fill="#000"/><rect x="12" y="399" width="5" height="1" fill="#000"/><rect x="10" y="403" width="7" height="1" fill="#000"/><rect x="12" y="406" width="5" height="1" fill="#000"/><rect x="12" y="410" width="5" height="1" fill="#000"/><rect x="12" y="414" width="5" height="1" fill="#000"/><rect x="12" y="418" width="5" height="1" fill="#000"/><rect x="10" y="421" width="7" height="1" fill="#000"/><text transform="translate(8 421.2) rotate(-90)" font-size="10" text-anchor="middle" font-family="Liberation Sans">110</text><rect x="12" y="425" width="5" height="1" fill="#000"/><rect x="12" y="429" width="5" height="1" fill="#000"/><rect x="12" y="432" width="5" height="1" fill="#000"/><rect x="12" y="436" width="5" height="1" fill="#000"/><rect x="10" y="440" width="7" height="1" fill="#000"/><rect x="12" y="443" width="5" height="1" fill="#000"/><rect x="12" y="447" width="5" height="1" fill="#000"/><rect x="12" y="451" width="5" height="1" fill="#000"/><rect x="12" y="454" width="5" height="1" fill="#000"/><rect x="10" y="458" width="7" height="1" fill="#000"/><text transform="translate(8 458.1) rotate(-90)" font-size="10" text-anchor="middle" font-family="Liberation Sans">120</text><rect x="12" y="462" width="5" height="1" fill="#000"/><rect x="12" y="465" width="5" height="1" fill="#000"/><rect x="12" y="469" width="5" height="1" fill="#000"/><rect x="12" y="473" width="5" height="1" fill="#000"/><rect x="10" y="477" width="7" height="1" fill="#000"/><rect x="12" y="480" width="5" height="1" fill="#000"/><rect x="12" y="484" width="5" height="1" fill="#000"/><rect x="12" y="488" width="5" height="1" fill="#000"/><rect x="12" y="491" width="5" height="1" fill="#000"/><rect x="10" y="495" width="7" height="1" fill="#000"/><text transform="translate(8 495.0) rotate(-90)" font-size="10" text-anchor="middle" font-family="Liberation Sans">130</text><rect x="12" y="499" width="5" height="1" fill="#000"/><rect x="12" y="502" width="5" height="1" fill="#000"/><rect x="12" y="506" width="5" height="1" fill="#000"/><rect x="12" y="510" width="5" height="1" fill="#000"/><rect x="10" y="513" width="7" height="1" fill="#000"/><rect x="12" y="517" width="5" height="1" fill="#000"/><rect x="12" y="521" width="5" height="1" fill="#000"/><rect x="12" y="524" width="5" height="1" fill="#000"/><rect x="12" y="528" width="5" height="1" fill="#000"/><rect x="10" y="532" width="7" height="1" fill="#000"/><text transform="translate(8 531.9) rotate(-90)" font-size="10" text-anchor="middle" font-family="Liberation Sans">140</text><rect x="12" y="536" width="5" height="1" fill="#000"/><rect x="12" y="539" width="5" height="1" fill="#000"/><rect x="12" y="543" width="5" height="1" fill="#000"/><rect x="12" y="547" width="5" height="1" fill="#000"/><rect x="10" y="550" width="7" height="1" fill="#000"/><rect x="12" y="554" width="5" height="1" fill="#000"/><rect x="12" y="558" width="5" height="1" fill="#000"/><rect x="12" y="561" width="5" height="1" fill="#000"/><rect x="12" y="565" width="5" height="1" fill="#000"/><rect x="10" y="569" width="7" height="1" fill="#000"/><text transform="translate(8 568.8) rotate(-90)" font-size="10" text-anchor="middle" font-family="Liberation Sans">150</text><rect x="12" y="572" width="5" height="1" fill="#000"/><rect x="12" y="576" width="5" height="1" fill="#000"/><rect x="12" y="580" width="5" height="1" fill="#000"/><rect x="12" y="584" width="5" height="1" fill="#000"/><rect x="10" y="587" width="7" height="1" fill="#000"/><rect x="12" y="591" width="5" height="1" fill="#000"/><rect x="12" y="595" width="5" height="1" fill="#000"/><rect x="12" y="598" width="5" height="1" fill="#000"/><rect x="12" y="602" width="5" height="1" fill="#000"/><rect x="10" y="606" width="7" height="1" fill="#000"/><text transform="translate(8 605.6) rotate(-90)" font-size="10" text-anchor="middle" font-family="Liberation Sans">160</text><rect x="12" y="609" width="5" height="1" fill="#000"/><rect x="12" y="613" width="5" height="1" fill="#000"/><rect x="12" y="617" width="5" height="1" fill="#000"/><rect x="12" y="620" width="5" height="1" fill="#000"/><rect x="10" y="624" width="7" height="1" fill="#000"/><rect x="12" y="628" width="5" height="1" fill="#000"/><rect x="12" y="631" width="5" height="1" fill="#000"/><rect x="12" y="635" width="5" height="1" fill="#000"/><rect x="12" y="639" width="5" height="1" fill="#000"/><rect x="10" y="643" width="7" height="1" fill="#000"/><text transform="translate(8 642.5) rotate(-90)" font-size="10" text-anchor="middle" font-family="Liberation Sans">170</text><rect x="12" y="646" width="5" height="1" fill="#000"/><rect x="12" y="650" width="5" height="1" fill="#000"/><rect x="12" y="654" width="5" height="1" fill="#000"/><rect x="12" y="657" width="5" height="1" fill="#000"/><rect x="10" y="661" width="7" height="1" fill="#000"/><rect x="12" y="665" width="5" height="1" fill="#000"/><rect x="12" y="668" width="5" height="1" fill="#000"/><rect x="12" y="672" width="5" height="1" fill="#000"/><rect x="12" y="676" width="5" height="1" fill="#000"/><rect x="10" y="679" width="7" height="1" fill="#000"/><text transform="translate(8 679.4) rotate(-90)" font-size="10" text-anchor="middle" font-family="Liberation Sans">180</text><rect x="12" y="683" width="5" height="1" fill="#000"/><rect x="12" y="687" width="5" height="1" fill="#000"/><rect x="12" y="690" width="5" height="1" fill="#000"/><rect x="12" y="694" width="5" height="1" fill="#000"/><rect x="10" y="698" width="7" height="1" fill="#000"/><rect x="12" y="702" width="5" height="1" fill="#000"/><rect x="12" y="705" width="5" height="1" fill="#000"/><rect x="12" y="709" width="5" height="1" fill="#000"/><rect x="12" y="713" width="5" height="1" fill="#000"/><rect x="10" y="716" width="7" height="1" fill="#000"/><text transform="translate(8 716.3) rotate(-90)" font-size="10" text-anchor="middle" font-family="Liberation Sans">190</text><rect x="12" y="720" width="5" height="1" fill="#000"/><rect x="12" y="724" width="5" height="1" fill="#000"/><rect x="12" y="727" width="5" height="1" fill="#000"/><rect x="12" y="731" width="5" height="1" fill="#000"/><rect x="10" y="735" width="7" height="1" fill="#000"/><rect x="12" y="738" width="5" height="1" fill="#000"/><rect x="12" y="742" width="5" height="1" fill="#000"/><rect x="12" y="746" width="5" height="1" fill="#000"/><rect x="12" y="750" width="5" height="1" fill="#000"/><rect x="10" y="753" width="7" height="1" fill="#000"/><text transform="translate(8 753.2) rotate(-90)" font-size="10" text-anchor="middle" font-family="Liberation Sans">200</text><rect x="12" y="757" width="5" height="1" fill="#000"/></svg>
<div class="ab" style="left:328px;top:141px;width:1225px;height:1px;background:#8a8a8a"></div>
<div class="ab" style="left:328px;top:141px;width:1px;height:753px;background:#8a8a8a"></div>
<div class="ab" style="left:519px;top:122px;width:1px;height:11px;background:#000"></div>
<div class="ab" style="left:310px;top:246px;width:8px;height:1px;background:#000"></div>
<div class="ab" style="left:1553px;top:141px;width:18px;height:753px;background:#f0f0f0"></div>
<div class="ab" style="left:1561px;top:159px;width:2px;height:675px;background:#858585"></div>
<div class="ab" style="left:1553px;top:141px;width:1px;height:753px;background:#fff"></div>
<div class="ab" style="left:304px;top:894px;width:1267px;height:1px;background:#fff"></div>
<div class="ab" style="left:0;top:895px;width:1573px;height:1px;background:#e4e4e4"></div>
<div class="ab" style="left:0;top:896px;width:1573px;height:8px;background:#f0f0f0;border-top:1px solid #9c9c9c"></div>
<div class="ab" style="left:377px;top:189px;width:1022px;height:1px;background:repeating-linear-gradient(90deg,#000 0 2px,transparent 2px 4px)"></div>
<div class="ab" style="left:377px;top:890px;width:1022px;height:1px;background:repeating-linear-gradient(90deg,#000 0 2px,transparent 2px 4px)"></div>
<div class="ab" style="left:376px;top:190px;width:1px;height:701px;background:repeating-linear-gradient(180deg,#000 0 2px,transparent 2px 4px)"></div>
<div class="ab" style="left:1398px;top:190px;width:1px;height:701px;background:repeating-linear-gradient(180deg,#000 0 2px,transparent 2px 4px)"></div>
<div class="hd" style="left:383.0px;top:189px"></div>
<div class="hd" style="left:872.5px;top:189px"></div>
<div class="hd" style="left:1362.5px;top:189px"></div>
<div class="hd" style="left:383.0px;top:475px"></div>
<div class="hd" style="left:1362.5px;top:475px"></div>
<div class="hd" style="left:383.0px;top:761px"></div>
<div class="hd" style="left:872.5px;top:761px"></div>
<div class="hd" style="left:1362.5px;top:761px"></div>
<div class="ab" style="left:876px;top:177px;width:1px;height:13px;background:#000"></div>
<div class="ab" style="left:872.5px;top:171px;width:8px;height:8px;border-radius:50%;background:#00ff00;border:1px solid #000"></div>
<div class="dt" style="left:386px;top:193.88px;line-height:19px">&lt;%L%Fecha del día&gt;</div>
<div class="dt" style="left:386px;top:212.08px;line-height:19px">Apellido: &lt;%T%Apellido&gt;</div>
<div class="dt" style="left:386px;top:230.28px;line-height:19px">Edad: &lt;%T%Edad del paciente&gt;</div>
<div class="dt" style="left:386px;top:248.48px;line-height:19px">Fecha de Nacimiento &lt;%T%Fecha de nacimiento&gt;</div>
<div class="dt" style="left:386px;top:284.88px;line-height:19px">Tratamientos:</div>
<div class="dt" style="left:386px;top:303.08px;line-height:19px">&lt;%F%TRATAMIENTO&gt;</div>
<div class="ab" style="left:650px;top:285px;width:609px;height:437px;border-radius:6px 6px 4px 4px;box-shadow:0 7px 20px rgba(0,0,0,.24);background:#0078d4;overflow:hidden">
<div class="ab" style="left:0;top:31px;width:609px;height:406px;background:#fff;border:1px solid #0078d4;border-top:0;border-radius:0 0 4px 4px"></div>
<div class="ab" style="left:9px;top:8px;font-size:12px;letter-spacing:-.05px;color:#fff;line-height:16px">Elección del campo de fusión</div>
<div class="ab" style="left:588px;top:8px;width:19px;height:19px;background:#c75050;color:#fff;font-size:11px;font-weight:bold;text-align:center;line-height:17px">x</div>
<div class="ab" style="left:1px;top:31px;width:607px;height:41px;background:#fffaef;border-top:1px solid #a8a098;box-shadow:inset 0 1px #fff"></div>
</div>
<div class="ab" style="left:652px;top:320px;width:53px;height:36px;background:#fffaef;border:1px solid #d8d8d8;border-right:2px solid #707070;border-bottom:2px solid #707070"></div>
<div class="tb" style="left:578.5px;top:341px;width:200px;line-height:13px">Nuevo</div>
<div class="ab" style="left:705px;top:320px;width:53px;height:36px;background:#fffaef;border:1px solid #d8d8d8;border-right:2px solid #707070;border-bottom:2px solid #707070"></div>
<div class="tb" style="left:631.5px;top:341px;width:200px;line-height:13px">Abrir</div>
<div class="ab" style="left:759px;top:320px;width:53px;height:36px;background:#fffaef;border:1px solid #d8d8d8;border-right:2px solid #707070;border-bottom:2px solid #707070"></div>
<div class="tb" style="left:685.5px;top:341px;width:200px;line-height:13px">Guardar</div>
<div class="ab" style="left:822px;top:320px;width:53px;height:36px;background:#fffaef;border:1px solid #d8d8d8;border-right:2px solid #707070;border-bottom:2px solid #707070"></div>
<div class="tb" style="left:748.5px;top:341px;width:200px;line-height:13px">Campo</div>
<div class="ab" style="left:875px;top:320px;width:14px;height:36px;background:#fffdf8;border:1px solid #b8b8b8;border-right:1px solid #707070;border-bottom:1px solid #707070"></div>
<div class="arr" style="left:878px;top:339px"></div>
<div class="ab" style="left:891px;top:320px;width:53px;height:36px;background:#fffaef;border:1px solid #d8d8d8;border-right:2px solid #707070;border-bottom:2px solid #707070"></div>
<div class="tb" style="left:817.5px;top:341px;width:200px;line-height:13px">Condición</div>
<svg class="ab" style="left:671px;top:323px" width="12" height="16" viewBox="0 0 12 16"><defs><linearGradient id="pg" x1="0" y1="0" x2="1" y2="1"><stop offset="0" stop-color="#fff"/><stop offset="1" stop-color="#d8d8d8"/></linearGradient></defs><path d="M.5 .5H9L11.5 3V15.5H.5Z" fill="url(#pg)" stroke="#7a7a7a"/><path d="M9 .5V3H11.5" fill="#dde6f0" stroke="#b0b8c0" stroke-width=".6"/></svg>
<svg class="ab" style="left:725px;top:323px" width="14" height="16" viewBox="0 0 14 16"><defs><linearGradient id="fg" x1="0" y1="0" x2="0" y2="1"><stop offset="0" stop-color="#f8e488"/><stop offset="1" stop-color="#d4aa40"/></linearGradient></defs><path d="M.5 .5H10V15.5H.5Z" fill="url(#fg)" stroke="#b08a30" stroke-width=".8"/><path d="M8 2.5H13.5V15.5H8Z" fill="#f2f2f2" stroke="#a0a0a0" stroke-width=".7"/><path d="M7.5 9L9.5 7V15.5H7.5Z" fill="#d4aa40"/><path d="M.5 15.5H13.5" stroke="#8a6a20"/></svg>
<svg class="ab" style="left:779px;top:323px" width="15" height="15" viewBox="0 0 15 15"><defs><linearGradient id="sg" x1="0" y1="0" x2="0" y2="1"><stop offset="0" stop-color="#9a9a9a"/><stop offset="1" stop-color="#404040"/></linearGradient></defs><rect x=".5" y=".5" width="14" height="14" rx="1.5" fill="url(#sg)" stroke="#555"/><rect x="3" y="1.5" width="9" height="5" fill="#e8e8e8"/><rect x="3" y="9" width="9" height="5.5" fill="#101010"/><rect x="5" y="10" width="2" height="3.5" fill="#ddd"/></svg>
<svg class="ab" style="left:839px;top:323px" width="18" height="17" viewBox="0 0 18 17"><path d="M1 6H5" stroke="#10a010" stroke-width="2.2"/><path d="M4 2.5L8 6L4 9.5Z" fill="#30c030"/><g fill="#fff" stroke="#8a8a8a" stroke-width="1"><rect x="8.5" y=".5" width="8" height="3.5" rx="1.7"/><rect x="9" y="4.3" width="7.5" height="3.5" rx="1.7"/><rect x="8.5" y="8" width="8" height="3.5" rx="1.7"/></g><rect x=".8" y="11.3" width="16" height="5" rx="2" fill="#1e5aa0" stroke="#174a88" stroke-width=".8"/><path d="M3 13.8H14M3 13.8L5 12.3M3 13.8L5 15.3M14 12.8V13.8" stroke="#fff" stroke-width="1.1" fill="none"/></svg>
<div class="ab" style="left:910px;top:322px;font-size:13px;font-weight:bold;line-height:15px;letter-spacing:-.6px;text-shadow:.5px 0 #000">IF</div>
<div class="ab" style="left:660px;top:366px;width:598px;height:311px;border-left:1px solid #646464;border-top:1px solid #646464;background:#fff"></div>
<div class="ab" style="left:665px;top:368px;font-size:10.6px;letter-spacing:-.03px;line-height:14px;color:#000;white-space:pre">&lt;%L%Fecha del día&gt;
Apellido: &lt;%T%Apellido&gt;
Edad: &lt;%T%Edad del paciente&gt;
Fecha de Nacimiento &lt;%T%Fecha de nacimiento&gt;

Tratamientos:
&lt;%F%TRATAMIENTO&gt;</div>
<div class="ab" style="left:773px;top:453px;width:1px;height:13px;background:#000"></div>
<div class="ab" style="left:1127px;top:686px;width:81px;height:27px;background:#f0f0f0;border:1px solid #fff;border-right:2px solid #696969;border-bottom:2px solid #696969;font-size:11px;line-height:24px;text-align:center;overflow:hidden;white-space:nowrap"><u>O</u>k</div>
<div class="ab" style="left:1213px;top:686px;width:45px;height:27px;overflow:hidden;z-index:0"><div class="ab" style="left:0;top:0;width:81px;height:27px;background:#f0f0f0;border:1px solid #fff;border-right:2px solid #696969;border-bottom:2px solid #696969;font-size:11px;line-height:24px;text-align:center;white-space:nowrap"><u>C</u>ancelar</div></div>
<div class="ab" style="left:821px;top:357px;width:178px;height:115px;background:#f9f9f9;border:1px solid #e2e2e2;border-radius:7px;box-shadow:0 6px 14px rgba(0,0,0,.18)"></div>
<div class="ab" style="left:827px;top:382px;width:166px;height:22px;background:#f0f0f0;border-radius:4px"></div>
<div class="mi" style="left:859px;top:363px;line-height:16px">Carta</div>
<svg class="ab" style="left:979px;top:366px" width="6" height="10" viewBox="0 0 6 10"><path d="M.8 .8L5 5L.8 9.2" fill="none" stroke="#333" stroke-width="1.1"/></svg>
<div class="mi" style="left:859px;top:385px;line-height:16px">Administración</div>
<svg class="ab" style="left:979px;top:388px" width="6" height="10" viewBox="0 0 6 10"><path d="M.8 .8L5 5L.8 9.2" fill="none" stroke="#333" stroke-width="1.1"/></svg>
<div class="mi" style="left:859px;top:407px;line-height:16px">Pietaje</div>
<svg class="ab" style="left:979px;top:410px" width="6" height="10" viewBox="0 0 6 10"><path d="M.8 .8L5 5L.8 9.2" fill="none" stroke="#333" stroke-width="1.1"/></svg>
<div class="mi" style="left:859px;top:429px;line-height:16px">Formas</div>
<svg class="ab" style="left:979px;top:432px" width="6" height="10" viewBox="0 0 6 10"><path d="M.8 .8L5 5L.8 9.2" fill="none" stroke="#333" stroke-width="1.1"/></svg>
<div class="mi" style="left:859px;top:451px;line-height:16px">Relaciones</div>
<svg class="ab" style="left:979px;top:454px" width="6" height="10" viewBox="0 0 6 10"><path d="M.8 .8L5 5L.8 9.2" fill="none" stroke="#333" stroke-width="1.1"/></svg>
<div class="ab" style="left:994px;top:379px;width:208px;height:269px;background:#f9f9f9;border:1px solid #e2e2e2;border-radius:7px;box-shadow:0 6px 14px rgba(0,0,0,.18)"></div>
<div class="ab" style="left:1000px;top:448px;width:196px;height:22px;background:#f0f0f0;border-radius:4px"></div>
<div class="mi" style="left:1032px;top:384.5px;line-height:16px">Apellido</div>
<div class="mi" style="left:1032px;top:406.5px;line-height:16px">Ciudad</div>
<div class="mi" style="left:1032px;top:428.5px;line-height:16px">Código postal</div>
<div class="mi" style="left:1032px;top:450.5px;line-height:16px">Comentario</div>
<div class="mi" style="left:1032px;top:472.5px;line-height:16px">Correo electrónico</div>
<div class="mi" style="left:1032px;top:494.5px;line-height:16px">DateSeq</div>
<div class="mi" style="left:1032px;top:516.5px;line-height:16px">Dirección 1</div>
<div class="mi" style="left:1032px;top:538.5px;line-height:16px">Dirección 2</div>
<div class="mi" style="left:1032px;top:560.5px;line-height:16px">Edad del paciente</div>
<div class="mi" style="left:1032px;top:582.5px;line-height:16px">Fecha de nacimiento</div>
<div class="mi" style="left:1032px;top:604.5px;line-height:16px">Teléfono 1</div>
<div class="mi" style="left:1032px;top:626.5px;line-height:16px">Teléfono 2</div>
<div class="ab" style="left:0;top:0;width:1573px;height:904px;border:1px solid #c4c4c4;border-radius:8px 8px 7px 7px"></div>
</div></body></html>
